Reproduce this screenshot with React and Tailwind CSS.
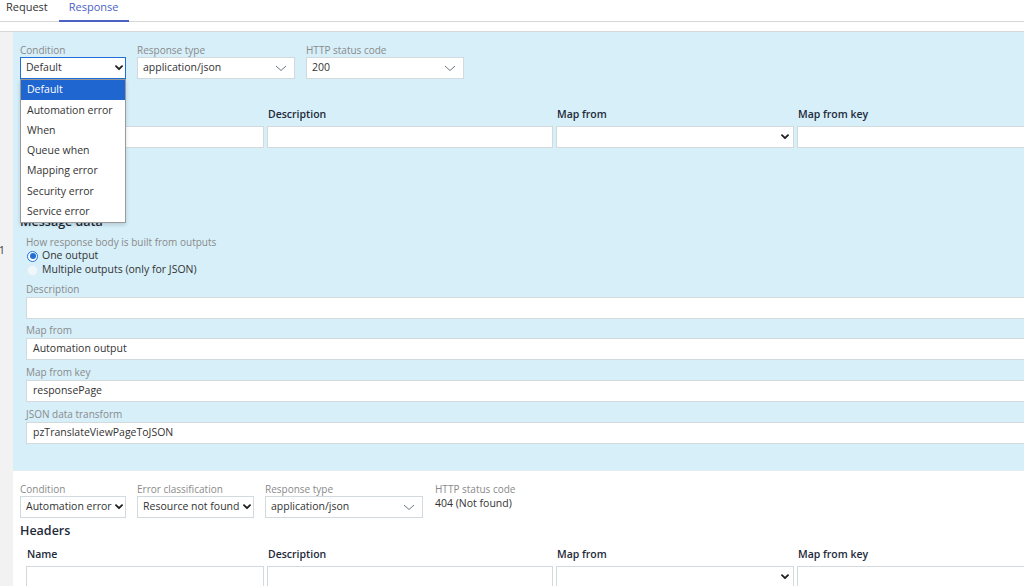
import React from 'react'

const font = { fontFamily: '"Open Sans", "Noto Sans", sans-serif' }

// small bold chevron used by native-looking selects
function SolidChevron() {
  return (
    <svg width="8" height="6" viewBox="0 0 8 6" className="shrink-0">
      <polyline points="1,1.2 4,4.2 7,1.2" fill="none" stroke="#222" strokeWidth="1.9" strokeLinecap="round" strokeLinejoin="round" />
    </svg>
  )
}

// thin light chevron for the pega-style selects
function ThinChevron() {
  return (
    <svg width="12" height="7" viewBox="0 0 12 7" className="shrink-0">
      <polyline points="1,1 6,5.5 11,1" fill="none" stroke="#6f7780" strokeWidth="1" />
    </svg>
  )
}

function Label({ children, className = '' }) {
  return <div className={`text-[10px] leading-[12px] text-[#8a8a8a] whitespace-nowrap ${className}`}>{children}</div>
}

function Select({ value, width, thin, focused }) {
  return (
    <div
      className={`h-[22px] bg-white flex items-center justify-between gap-[3px] pl-[5px] text-[10.5px] text-[#333] whitespace-nowrap ${thin ? 'pr-[7px]' : 'pr-[2px]'} ${focused ? 'border-[1.5px] border-[#1f6fd6]' : 'border border-[#d3dade]'}`}
      style={{ width }}
    >
      <span>{value}</span>
      {thin ? <ThinChevron /> : <SolidChevron />}
    </div>
  )
}

function TextInput({ value = '', className = '' }) {
  return (
    <div className={`h-[22px] bg-white border border-[#d3dade] flex items-center pl-[6px] text-[10.5px] text-[#333] whitespace-nowrap ${className}`}>
      {value}
    </div>
  )
}

const conditionOptions = ['Default', 'Automation error', 'When', 'Queue when', 'Mapping error', 'Security error', 'Service error']

function HeadersTable() {
  const cols = [
    { name: 'Name', w: 238 },
    { name: 'Description', w: 286 },
    { name: 'Map from', w: 238, select: true },
    { name: 'Map from key', w: 240 },
  ]
  return (
    <div className="pl-[6px]">
      <div className="flex gap-[3px]">
        {cols.map((c) => (
          <div key={c.name} className="shrink-0 text-[10.5px] leading-[14px] font-semibold text-[#1e2a3a] pl-[1px]" style={{ width: c.w }}>
            {c.name}
          </div>
        ))}
      </div>
      <div className="flex gap-[3px] mt-[5px]">
        {cols.map((c) =>
          c.select ? (
            <div key={c.name} className="shrink-0 h-[22px] bg-white border border-[#d3dade] flex items-center justify-end pr-[4px]" style={{ width: c.w }}>
              <SolidChevron />
            </div>
          ) : (
            <div key={c.name} className="shrink-0 h-[22px] bg-white border border-[#d3dade]" style={{ width: c.w }} />
          )
        )}
      </div>
    </div>
  )
}

export default function App() {
  return (
    <div className="w-[1024px] h-[586px] overflow-hidden bg-white flex flex-col" style={font}>
      {/* tabs */}
      <div className="h-[22px] shrink-0 border-b border-[#d6d6d6] flex items-start text-[11px] leading-[14px]">
        <div className="pl-[6px] pr-[10px] text-[#333]">Request</div>
        <div className="ml-[1px] px-[10px] h-[22px] text-[#4b62c4] border-b-2 border-[#4b62c4]">Response</div>
      </div>
      <div className="h-[9px] shrink-0" />

      <div className="flex-1 flex border-t border-[#d8d8d8] min-h-0">
        {/* row gutter */}
        <div className="w-[13px] shrink-0 bg-[#f2f2f2]">
          <div className="h-[438px] flex flex-col">
            <div className="h-[211px]" />
            <div className="-ml-[1px] text-[10px] leading-[14px] text-[#333]">1</div>
          </div>
        </div>

        <div className="flex-1 min-w-0 flex flex-col">
          {/* default response */}
          <div className="h-[438px] shrink-0 bg-[#d6eff9] pl-[7px] pt-[12px]">
            <div className="flex gap-[11px]">
              <div className="relative">
                <Label>Condition</Label>
                <div className="mt-[1px]">
                  <Select value="Default" width={106} focused />
                </div>
                <div className="absolute left-0 top-[35px] w-[106px] z-10 bg-white border border-[#9a9a9a] shadow-[0_2px_4px_rgba(0,0,0,0.15)] text-[10.5px] text-[#333]">
                  {conditionOptions.map((o, i) => (
                    <div key={o} className={`h-[20.3px] flex items-center pl-[6px] whitespace-nowrap ${i === 0 ? 'bg-[#1f66d0] text-white' : ''}`}>
                      {o}
                    </div>
                  ))}
                </div>
              </div>
              <div>
                <Label>Response type</Label>
                <div className="mt-[1px]">
                  <Select value="application/json" width={158} thin />
                </div>
              </div>
              <div>
                <Label>HTTP status code</Label>
                <div className="mt-[1px]">
                  <Select value="200" width={158} thin />
                </div>
              </div>
            </div>

            <div className="mt-[28px]">
              <HeadersTable />
            </div>

            <div className="mt-[65px] text-[12.5px] leading-[18px] font-semibold text-[#1e2a3a]">Message data</div>

            <div className="pl-[6px]">
              <Label className="mt-[5px]">How response body is built from outputs</Label>
              <div className="flex items-center h-[14px] mt-[1px] text-[10.5px] text-[#333]">
                <span className="w-[11px] h-[11px] rounded-full border border-[#1f6fd6] bg-white flex items-center justify-center ml-[1px] mr-[4px]">
                  <span className="w-[6px] h-[6px] rounded-full bg-[#1f6fd6]" />
                </span>
                One output
              </div>
              <div className="flex items-center h-[14px] text-[10.5px] text-[#333]">
                <span className="w-[11px] h-[11px] rounded-full border border-[#e6eef2] bg-[#eef7fb] ml-[1px] mr-[4px]" />
                Multiple outputs (only for JSON)
              </div>

              <Label className="mt-[6px]">Description</Label>
              <TextInput className="mt-[2px] w-[1010px]" />

              <Label className="mt-[5px]">Map from</Label>
              <TextInput className="mt-[2px] w-[1010px]" value="Automation output" />

              <Label className="mt-[6px]">Map from key</Label>
              <TextInput className="mt-[2px] w-[1010px]" value="responsePage" />

              <Label className="mt-[6px]">JSON data transform</Label>
              <TextInput className="mt-[2px] w-[1010px]" value="pzTranslateViewPageToJSON" />
            </div>
          </div>

          {/* automation error response */}
          <div className="flex-1 bg-white pl-[7px] pt-[12px] border-t border-[#e2eef3]">
            <div className="flex gap-[11px]">
              <div>
                <Label>Condition</Label>
                <div className="mt-[1px]">
                  <Select value="Automation error" width={106} />
                </div>
              </div>
              <div>
                <Label>Error classification</Label>
                <div className="mt-[1px]">
                  <Select value="Resource not found" width={117} />
                </div>
              </div>
              <div>
                <Label>Response type</Label>
                <div className="mt-[1px]">
                  <Select value="application/json" width={158} thin />
                </div>
              </div>
              <div className="ml-[1px]">
                <Label>HTTP status code</Label>
                <div className="text-[10.5px] leading-[14px] text-[#333] mt-[1px]">404 (Not found)</div>
              </div>
            </div>

            <div className="mt-[4px] text-[12.5px] leading-[18px] font-semibold text-[#1e2a3a]">Headers</div>

            <div className="mt-[7px]">
              <HeadersTable />
            </div>
          </div>
        </div>
      </div>
    </div>
  )
}
